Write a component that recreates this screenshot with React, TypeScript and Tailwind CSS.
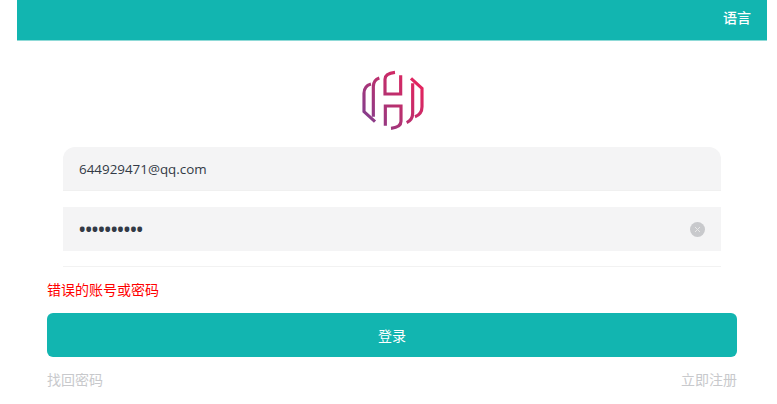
const font = { fontFamily: '"Open Sans", "Noto Sans CJK SC", sans-serif' };

function Logo() {
  return (
    <svg width="100" height="80" viewBox="6 0 300 240" fill="none" strokeWidth="9.5">
      <defs>
        <linearGradient id="g" gradientUnits="userSpaceOnUse" x1="75" y1="190" x2="245" y2="70">
          <stop offset="0" stopColor="#803f90" />
          <stop offset="0.5" stopColor="#b8306f" />
          <stop offset="1" stopColor="#e5245e" />
        </linearGradient>
      </defs>
      <g stroke="url(#g)">
        <path d="M93 72 Q72 78 72 100 V155 L105 185" />
        <path d="M118 54 Q100 60 100 80 V170" />
        <path d="M182 46 V102 H135 V58 Q135 40 165 37" />
        <path d="M136 197 V138 H183 V184 Q183 202 153 205" />
        <path d="M200 188 Q218 180 218 160 V70" />
        <path d="M225 170 Q246 162 246 140 V85 L213 55" />
      </g>
    </svg>
  );
}

export default function App() {
  return (
    <div className="w-[777px] h-[404px] bg-white overflow-hidden pl-[17px] pr-[10px]" style={font}>
      <header className="h-[41px] bg-[#12b5b0] border-b border-[#8fdad7] flex items-center justify-end pr-[16px] pb-[5px] text-white text-[14px] leading-[20px] font-medium">
        语言
      </header>
      <div className="flex justify-center pt-[19px]">
        <Logo />
      </div>
      <div className="px-[46px] pt-[7px]">
        <div className="h-[44px] bg-[#f4f4f5] rounded-t-[12px] border-b border-[#f0f0f0] px-[16px] pt-[1px] flex items-center text-[13.4px] text-[#333a46]">
          644929471@qq.com
        </div>
        <div className="h-[44px] mt-[16px] bg-[#f4f4f5] px-[16px] flex items-center justify-between text-[#333a46]">
          <span className="text-[17px] leading-[20px] font-bold pt-[1px]">••••••••••</span>
          <span className="w-[15px] h-[15px] rounded-full bg-[#c8c9cc] flex items-center justify-center">
            <svg width="7" height="7" viewBox="0 0 7 7" stroke="#e8e8e8" strokeWidth="1">
              <path d="M1 1 6 6M6 1 1 6" />
            </svg>
          </span>
        </div>
        <div className="h-px mt-[15px] bg-[#f2f2f2]" />
      </div>
      <div className="px-[30px]">
        <div className="mt-[13px] text-[14px] leading-[20px] text-[#ff0000]">错误的账号或密码</div>
        <button className="mt-[13px] w-full h-[44px] rounded-[6px] bg-[#12b5b0] text-white text-[14px]">登录</button>
        <div className="mt-[13px] flex justify-between text-[14px] leading-[20px] text-[#c8c9cc]">
          <span>找回密码</span>
          <span>立即注册</span>
        </div>
      </div>
    </div>
  );
}
